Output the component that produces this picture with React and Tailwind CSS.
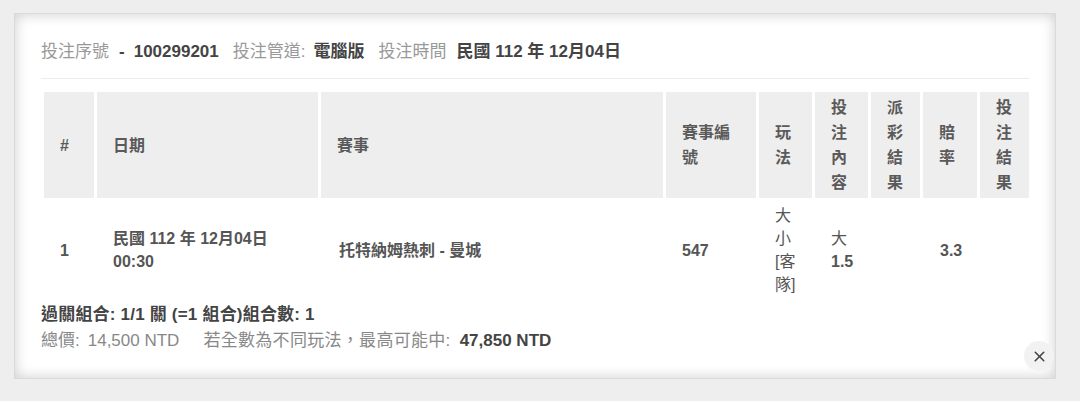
import { X } from "lucide-react"

const heads = ["#", "日期", "賽事", "賽事編號", "玩法", "投注內容", "派彩結果", "賠率", "投注結果"]

const cols = "grid grid-cols-[50px_221px_342px_90px_53px_53px_49px_54px_49px] gap-x-[3px]"

export default function App() {
  return (
    <div lang="zh-TW" className="h-[401px] w-[1080px] bg-[#eeeeee] pl-[14px] pt-[13px] font-['Liberation_Sans','Noto_Sans_CJK_TC',sans-serif]">
      <div className="relative h-[366px] w-[1042px] border border-[#dadada] bg-white px-[26px] pt-[26px] shadow-[inset_0_0_14px_rgba(0,0,0,0.2)]">
        {/* order meta */}
        <div className="flex items-center border-b border-[#ececec] pb-[14px] text-[17px] leading-[24px]">
          <span className="text-[#999]">投注序號</span>
          <span className="ml-[10px] font-bold text-[#444]">-</span>
          <span className="ml-[9px] font-bold text-[#444]">100299201</span>
          <span className="ml-[14px] text-[#999]">投注管道:</span>
          <span className="ml-[8px] font-bold text-[#444]">電腦版</span>
          <span className="ml-[14px] text-[#999]">投注時間</span>
          <span className="ml-[10px] font-bold text-[#444]">民國 112 年 12月04日</span>
        </div>

        {/* bets table */}
        <div className="mt-[13px] pl-[3px]">
          <div className={cols}>
            {heads.map((h) => (
              <div key={h} className="flex h-[106px] items-center bg-[#eeeeee] px-[16px] text-[16px] font-bold leading-[25px] text-[#5a5a5a]">
                <span className="break-all">{h}</span>
              </div>
            ))}
          </div>
          <div className={cols + " mt-[3px] text-[16px] font-bold leading-[23px] text-[#555]"}>
            <div className="flex h-[98px] items-center px-[16px]">1</div>
            <div className="flex items-center px-[16px]">
              <span>民國 112 年 12月04日<br />00:30</span>
            </div>
            <div className="flex items-center px-[18px]">托特納姆熱刺 - 曼城</div>
            <div className="flex items-center px-[16px]">547</div>
            <div className="flex items-center px-[16px]">
              <span className="break-all font-normal">大小[客隊]</span>
            </div>
            <div className="flex items-center px-[16px]">
              <span><span className="font-normal">大</span><br />1.5</span>
            </div>
            <div className="px-[16px]"></div>
            <div className="flex items-center px-[17px]">3.3</div>
            <div className="px-[16px]"></div>
          </div>
        </div>

        {/* totals */}
        <div className="mt-[3px] text-[17px] leading-[26px]">
          <div className="font-bold tracking-[0.2px] text-[#444]">過關組合: 1/1 關 (=1 組合)組合數: 1</div>
          <div className="flex text-[#888]">
            <span>總價:</span>
            <span className="ml-[8px]">14,500 NTD</span>
            <span className="ml-[24px] tracking-[0.3px]">若全數為不同玩法，最高可能中:</span>
            <span className="ml-[9px] font-bold text-[#444]">47,850 NTD</span>
          </div>
        </div>

        <button className="absolute bottom-[7px] right-[1px] flex h-[30px] w-[30px] items-center justify-center rounded-full bg-[#f2f2f2] text-[#444]">
          <X size={17} strokeWidth={2.2} />
        </button>
      </div>
    </div>
  )
}
